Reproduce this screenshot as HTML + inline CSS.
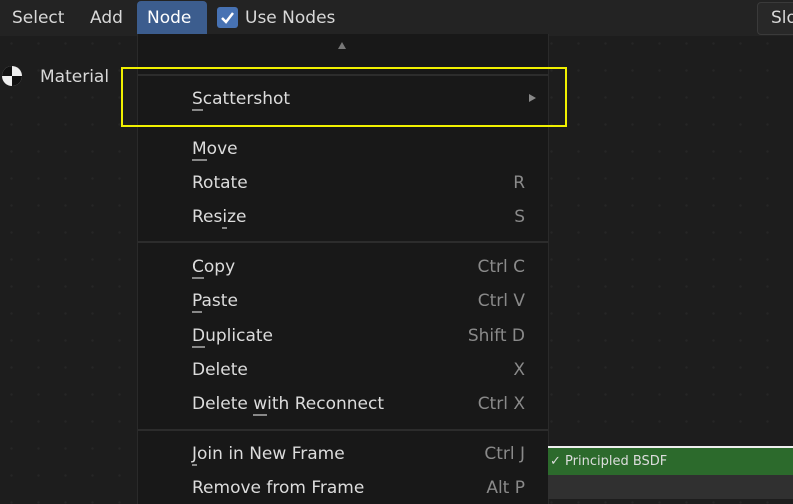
<!DOCTYPE html>
<html><head><style>
body{margin:0;width:793px;height:499px;overflow:hidden;background:#1d1d1d;font-family:"DejaVu Sans","Liberation Sans",sans-serif;position:relative;
background-image:radial-gradient(#262626 1.2px,transparent 1.3px);background-size:27px 27px;background-position:-2px 30px}
.hdr{position:absolute;left:0;top:0;width:793px;height:36px;background:#232323}
.t{position:absolute;color:#d8d8d8;font-size:17px;white-space:nowrap}
.menu{position:absolute;left:137px;top:34px;width:410px;height:470px;background:#181818;border-left:1px solid #2a2a2a;border-right:1px solid #2a2a2a}
.it{position:absolute;left:54px;color:#dcdcdc;font-size:17px;white-space:nowrap}
.sc{position:absolute;right:23px;color:#8a8a8a;font-size:17px;white-space:nowrap}
.sep{position:absolute;left:0;width:410px;height:2px;background:#2c2c2c}
u{text-decoration:none;border-bottom:2px solid #888;}
</style></head><body>
<div class="hdr"></div>
<div class="t" style="left:12px;top:8px">Select</div>
<div class="t" style="left:90px;top:8px">Add</div>
<div style="position:absolute;left:137px;top:1px;width:70px;height:33px;background:#3c5d8e;border-radius:4px 4px 0 0"></div>
<div class="t" style="left:147px;top:8px;color:#fff">Node</div>
<div style="position:absolute;left:217px;top:7px;width:21px;height:21px;background:#4772b3;border-radius:3px"><svg width="21" height="21"><path d="M5 11l4 4 7-9" stroke="#fff" stroke-width="2.5" fill="none"/></svg></div>
<div class="t" style="left:245px;top:8px">Use Nodes</div>
<div style="position:absolute;left:757px;top:2px;width:50px;height:31px;border:1px solid #3a3a3a;border-radius:4px;background:#282828"></div>
<div class="t" style="left:771px;top:8px">Slo</div>
<svg style="position:absolute;left:0;top:64px" width="24" height="24"><circle cx="12" cy="12" r="10" fill="#eee"/><path d="M12 2A10 10 0 0 0 2 12H12ZM12 12H22A10 10 0 0 1 12 22Z" fill="#111"/></svg>
<div class="t" style="left:40px;top:67px">Material</div>
<div class="menu">
<div style="position:absolute;left:200px;top:8px;width:0;height:0;border-left:4px solid transparent;border-right:4px solid transparent;border-bottom:7px solid #777"></div>
<div class="sep" style="top:40px"></div>
<div class="it" style="top:55px"><u>S</u>cattershot</div>
<div style="position:absolute;right:12px;top:60px;border-top:4px solid transparent;border-bottom:4px solid transparent;border-left:7px solid #888"></div>
<div class="it" style="top:105px"><u>M</u>ove</div>
<div class="it" style="top:139px">Rotate</div><div class="sc" style="top:139px">R</div>
<div class="it" style="top:173px">Res<u>i</u>ze</div><div class="sc" style="top:173px">S</div>
<div class="sep" style="top:207px"></div>
<div class="it" style="top:223px"><u>C</u>opy</div><div class="sc" style="top:223px">Ctrl C</div>
<div class="it" style="top:257px"><u>P</u>aste</div><div class="sc" style="top:257px">Ctrl V</div>
<div class="it" style="top:292px"><u>D</u>uplicate</div><div class="sc" style="top:292px">Shift D</div>
<div class="it" style="top:326px">Delete</div><div class="sc" style="top:326px">X</div>
<div class="it" style="top:360px">Delete <u>w</u>ith Reconnect</div><div class="sc" style="top:360px">Ctrl X</div>
<div class="sep" style="top:395px"></div>
<div class="it" style="top:410px"><u>J</u>oin in New Frame</div><div class="sc" style="top:410px">Ctrl J</div>
<div class="it" style="top:444px">Remove from Frame</div><div class="sc" style="top:444px">Alt P</div>
</div>
<div style="position:absolute;left:548px;top:446px;width:245px;height:2px;background:#eee"></div>
<div style="position:absolute;left:548px;top:448px;width:245px;height:27px;background:#2c6a2c"></div>
<div style="position:absolute;left:548px;top:475px;width:245px;height:24px;background:#303030"></div>
<div class="t" style="left:550px;top:454px;font-size:13px;color:#ddd">✓ Principled BSDF</div>
<div style="position:absolute;left:121px;top:67px;width:442px;height:56px;border:2px solid #f0f000"></div>
</body></html>
